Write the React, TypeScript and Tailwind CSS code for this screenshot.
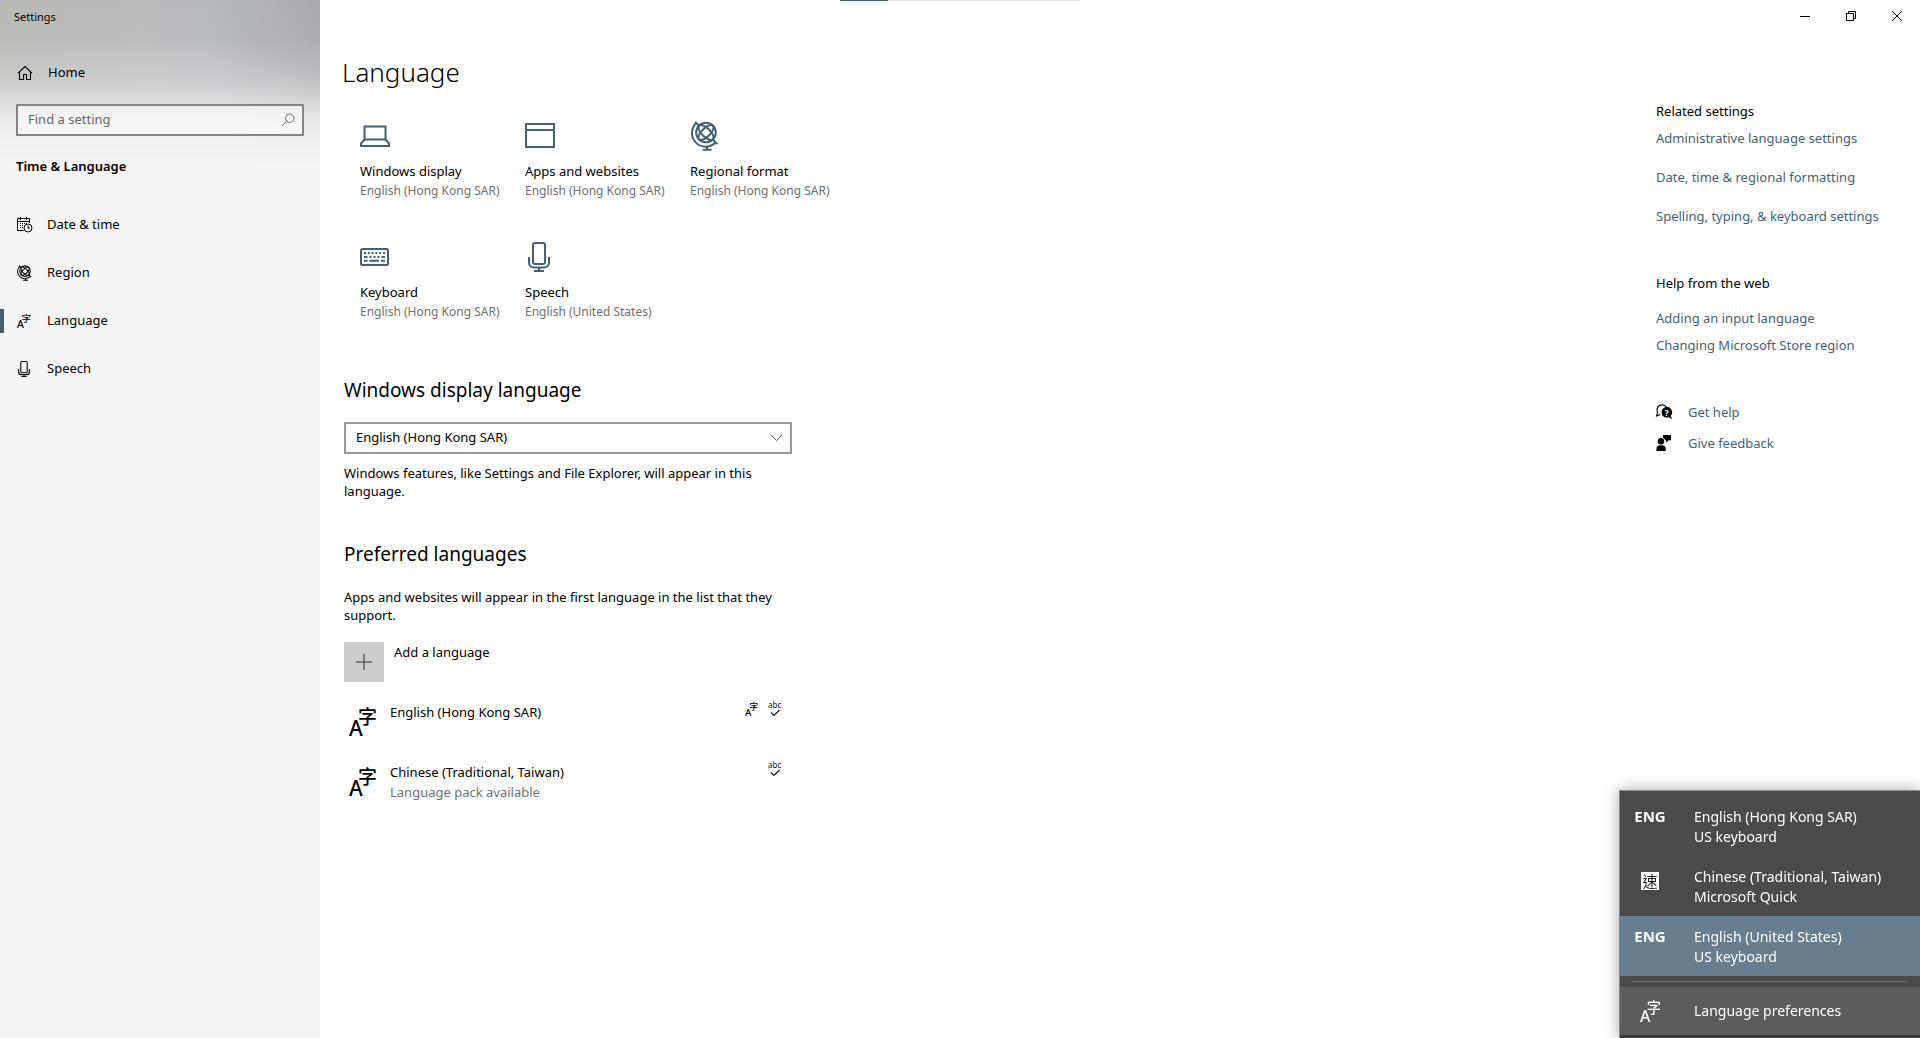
import type { ReactNode } from "react";

interface IconProps {
  className?: string;
}

function HomeIcon() {
  return (
    <svg width="16" height="16" viewBox="0 0 16 16" fill="none" stroke="currentColor" strokeWidth="1.1">
      <path d="M1 8.2 8 1.5l7 6.7M2.5 7v7.5h4V9.500h3v5h4V7" />
    </svg>
  );
}

function SearchIcon() {
  return (
    <svg width="14" height="14" viewBox="0 0 14 14" fill="none" stroke="#666" strokeWidth="1">
      <circle cx="8.800" cy="5.200" r="4.200" />
      <path d="M5.800 8.200 1 13" />
    </svg>
  );
}

function CalendarIcon() {
  return (
    <svg width="16" height="16" viewBox="0 0 16 16" fill="none" stroke="currentColor">
      <path d="M6.500 13.500h-6v-12h12V6M.5 4.500h12M3.500 0v3M9.500 0v3" />
      <path d="M3 6.500h1M5 6.500h1M7 6.500h1M9 6.500h1M3 8.500h1M5 8.500h1M3 10.500h1M5 10.500h1" />
      <circle cx="11" cy="11" r="4" />
      <path d="M11 8.500V11h2" />
    </svg>
  );
}

function GlobeIcon({ className }: IconProps) {
  return (
    <svg className={className} viewBox="0 0 28 30" fill="none" stroke="currentColor" strokeWidth="2">
      <circle cx="15" cy="11.500" r="9.800" />
      <ellipse cx="15" cy="11.500" rx="9.800" ry="4.300" transform="rotate(45 15 11.500)" />
      <ellipse cx="15" cy="11.500" rx="9.800" ry="4.300" transform="rotate(-45 15 11.500)" />
      <path d="M4 1l4.500 4M21.500 18.500l5 4.500M4.800 2.500A13.500 13.500 0 0 0 24.500 21.500" />
      <path d="M16 25v4M11.500 28.700h9" />
    </svg>
  );
}

function MicIcon({ className }: IconProps) {
  return (
    <svg className={className} viewBox="0 0 22 30" fill="none" stroke="currentColor" strokeWidth="2">
      <rect x="5" y="1" width="12" height="21" rx="2" />
      <path d="M1 15v5.500c0 2.800 2.200 5 5 5h10c2.800 0 5-2.200 5-5V15M11 25.500V29M6 29h10" />
    </svg>
  );
}

function LaptopIcon() {
  return (
    <svg width="30" height="22" viewBox="0 0 30 22" fill="none" stroke="currentColor" strokeWidth="2">
      <path d="M4.500 14.500V1.500h21v13M4.500 14.500h21l3.500 4V21H1v-2.500z" />
    </svg>
  );
}

function WindowIcon() {
  return (
    <svg width="30" height="26" viewBox="0 0 30 26" fill="none" stroke="currentColor" strokeWidth="2">
      <path d="M1 1h28v23H1zM1 7h28" />
    </svg>
  );
}

function KeyboardIcon() {
  return (
    <svg width="29" height="18" viewBox="0 0 29 18" fill="none" stroke="currentColor" strokeWidth="2">
      <rect x="1" y="1" width="27" height="16" rx="1.500" />
      <path d="M4 5h21" strokeDasharray="2 1.800" />
      <path d="M4 9h3.500M9.500 9h2M13.500 9h2M17.500 9h2M21.500 9H25" />
      <path d="M4 12.800h3.500M9.500 12.800h9.500M21 12.800h4" />
    </svg>
  );
}

function LanguageIcon({ className }: IconProps) {
  return (
    <svg className={`overflow-visible ${className}`} viewBox="0 0 28 28" fill="currentColor">
      <text x="0" y="28" fontSize="21" fontWeight="500" fontFamily="Noto Sans">A</text>
      <text x="9" y="16" fontSize="19" fontWeight="500" fontFamily="Noto Sans CJK TC">字</text>
    </svg>
  );
}

function SpellCheckIcon() {
  return (
    <svg className="overflow-visible" width="14" height="15" viewBox="0 0 14 15" fill="none">
      <text x="0" y="6" fontSize="8" fontFamily="Noto Sans" fill="#111">abc</text>
      <path d="M3 10.500l3 3L11.500 8" stroke="#111" strokeWidth="1.200" />
    </svg>
  );
}

function HelpIcon() {
  return (
    <svg className="overflow-visible" width="16" height="16" viewBox="0 0 16 16">
      <path d="M1.600 8.200A5 5 0 1 1 10.500 3.500M1.600 8.200.6 12l3.500-1.500" fill="none" stroke="currentColor" strokeWidth="1.200" />
      <path
        d="M10.500 3a5.300 5.300 0 1 0 2.300 10.200l3.200 2-1.200-3.400A5.300 5.300 0 0 0 10.500 3z"
        fill="currentColor"
      />
      <text x="8.500" y="11.500" fontSize="9" fontWeight="700" fontFamily="Noto Sans" fill="#fff">?</text>
    </svg>
  );
}

function FeedbackIcon() {
  return (
    <svg width="16" height="16" viewBox="0 0 16 16" fill="currentColor">
      <circle cx="5" cy="6.200" r="3.200" />
      <path d="M.5 16v-2.500c0-2 1.500-3.300 3.300-3.300h2.600c1.900 0 3.300 1.300 3.300 3.300V16zM7 0h8v5.200h-2.300L10 7.800V5.200H9.200A4.300 4.300 0 0 0 7 2.400z" />
    </svg>
  );
}

const navItems = [
  { label: "Date & time", icon: <CalendarIcon />, current: false },
  { label: "Region", icon: <GlobeIcon className="h-4 w-[15px]" />, current: false },
  { label: "Language", icon: <LanguageIcon className="h-[14px] w-[14px]" />, current: true },
  { label: "Speech", icon: <MicIcon className="ml-px h-4 w-3" />, current: false },
];

const tiles = [
  { title: "Windows display", value: "English (Hong Kong SAR)", icon: <LaptopIcon /> },
  { title: "Apps and websites", value: "English (Hong Kong SAR)", icon: <WindowIcon /> },
  { title: "Regional format", value: "English (Hong Kong SAR)", icon: <GlobeIcon className="h-[30px] w-[30px]" /> },
  { title: "Keyboard", value: "English (Hong Kong SAR)", icon: <KeyboardIcon /> },
  { title: "Speech", value: "English (United States)", icon: <MicIcon className="ml-[3px] h-[30px] w-[22px]" /> },
];

function Sidebar() {
  return (
    <aside className="w-80 shrink-0 bg-[#f5f5f5] bg-[linear-gradient(to_bottom,transparent_0px,rgba(245,245,245,0.04)_40px,rgba(245,245,245,0.3)_80px,rgba(245,245,245,0.85)_120px,#f5f5f5_165px),linear-gradient(to_right,#b9b9b5,#b9bbbd_45%,#b7babf_65%,#a7a9ad)]">
      <p className="pt-2 pl-[14px] text-[11px] leading-[18px]">Settings</p>
      <a href="#home" className="mt-[27px] flex h-10 items-center gap-[15px] pl-[17px] text-[13px]">
        <HomeIcon />
        Home
      </a>
      <div className="mx-4 mt-[11px] flex h-8 items-center border-2 border-[#858585] bg-white/50 pr-[7px] pl-[10px]">
        <input
          type="text"
          aria-label="Find a setting"
          placeholder="Find a setting"
          className="min-w-0 flex-1 bg-transparent text-[13px] outline-none placeholder:text-[#666]"
        />
        <button type="button" aria-label="Search">
          <SearchIcon />
        </button>
      </div>
      <h2 className="mt-5 pl-4 text-[13px] leading-5 font-semibold">Time &amp; Language</h2>
      <nav className="mt-[25px]">
        {navItems.map((item) => (
          <a key={item.label} href="#" className="flex h-12 items-center text-[13px]">
            <span className={item.current ? "h-6 w-1 bg-[#455f75]" : "h-6 w-1"} />
            <span className="ml-[13px] w-[30px]">{item.icon}</span>
            {item.label}
          </a>
        ))}
      </nav>
    </aside>
  );
}

function WindowControls() {
  return (
    <div className="flex h-8 justify-end">
      <button type="button" aria-label="Minimise" className="flex w-[46px] items-center justify-center">
        <svg width="10" height="10" viewBox="0 0 10 10" stroke="#000">
          <path d="M0 5.500h10" />
        </svg>
      </button>
      <button type="button" aria-label="Restore" className="flex w-[46px] items-center justify-center">
        <svg width="10" height="10" viewBox="0 0 10 10" fill="none" stroke="#000">
          <path d="M.5 2.500h7v7h-7zM2.500 2.500v-2h7v7h-2" />
        </svg>
      </button>
      <button type="button" aria-label="Close" className="flex w-[46px] items-center justify-center">
        <svg width="10" height="10" viewBox="0 0 10 10" stroke="#000">
          <path d="M0 0l10 10M10 0L0 10" />
        </svg>
      </button>
    </div>
  );
}

interface LanguageRowProps {
  name: string;
  note?: string;
  badges: ReactNode;
}

function LanguageRow(props: LanguageRowProps) {
  return (
    <li className="flex h-[60px] pr-[10px] pl-[5px]">
      <LanguageIcon className="mt-[6px] h-7 w-7" />
      <div className="ml-[13px] flex-1 text-[13px] leading-5">
        <p>{props.name}</p>
        {props.note && <p className="text-[#707070]">{props.note}</p>}
      </div>
      <div className="flex gap-[10px]">{props.badges}</div>
    </li>
  );
}

function RelatedLinks() {
  return (
    <aside className="w-[264px] shrink-0 pt-[69px] text-[13px] leading-5 text-[#455f75]">
      <h2 className="text-black">Related settings</h2>
      <ul className="mt-[7px] flex flex-col gap-[19px]">
        <li><a href="#">Administrative language settings</a></li>
        <li><a href="#">Date, time &amp; regional formatting</a></li>
        <li><a href="#">Spelling, typing, &amp; keyboard settings</a></li>
      </ul>
      <h2 className="mt-[47px] text-black">Help from the web</h2>
      <ul className="mt-[15px] flex flex-col gap-[7px]">
        <li><a href="#">Adding an input language</a></li>
        <li><a href="#">Changing Microsoft Store region</a></li>
      </ul>
      <div className="mt-[47px] flex flex-col gap-[11px]">
        <a href="#" className="flex items-center gap-4">
          <span className="text-black"><HelpIcon /></span>
          Get help
        </a>
        <a href="#" className="flex items-center gap-4">
          <span className="text-black"><FeedbackIcon /></span>
          Give feedback
        </a>
      </div>
    </aside>
  );
}

interface InputMethodProps {
  badge: ReactNode;
  name: string;
  keyboard: string;
  active?: boolean;
}

function InputMethod(props: InputMethodProps) {
  return (
    <button
      type="button"
      className={`flex h-[60px] w-full pt-[11px] text-left text-sm leading-5 ${props.active ? "bg-[#687d8e]" : ""}`}
    >
      <span className="flex w-[60px] justify-center text-[15px] leading-[18px] font-bold">{props.badge}</span>
      <span className="ml-[14px]">
        {props.name}
        <br />
        {props.keyboard}
      </span>
    </button>
  );
}

function InputSwitcher() {
  return (
    <div className="fixed right-0 bottom-0 w-[301px] border-t border-l border-[#8c8c8c] bg-[#4a4a4a] pt-[5px] text-white shadow-[0_0_14px_rgba(0,0,0,0.35)]">
      <InputMethod badge="ENG" name="English (Hong Kong SAR)" keyboard="US keyboard" />
      <InputMethod
        badge={
          <span className="mt-[5px] flex h-[18px] w-[18px] items-center justify-center bg-white font-['Noto_Sans_CJK_TC',sans-serif] text-[15px] leading-[18px] font-normal text-[#222]">
            速
          </span>
        }
        name="Chinese (Traditional, Taiwan)"
        keyboard="Microsoft Quick"
      />
      <InputMethod badge="ENG" name="English (United States)" keyboard="US keyboard" active />
      <hr className="mx-3 my-[5px] border-[#6d6d6d]" />
      <button
        type="button"
        className="flex h-[51px] w-full items-center border-b-[3px] border-[#3a383a] bg-[#5c5c5c] text-sm"
      >
        <span className="ml-5 w-[54px]">
          <LanguageIcon className="h-[21px] w-[21px]" />
        </span>
        Language preferences
      </button>
    </div>
  );
}

export default function App() {
  return (
    <div className="flex min-h-screen bg-white font-['Noto_Sans','Noto_Sans_CJK_TC',sans-serif] text-black">
      <div className="absolute inset-x-0 top-0 mx-auto h-px w-60 bg-[#e5e5e5]">
        <div className="h-px w-12 bg-[#455f75]" />
      </div>
      <Sidebar />
      <div className="min-w-0 flex-1">
        <WindowControls />
        <div className="flex justify-between">
          <main className="w-[520px] pt-5 pl-6">
            <h1 className="-ml-[2px] text-[26px] leading-10 font-light">Language</h1>
            <ul className="ml-4 grid grid-cols-[repeat(3,165px)]">
              {tiles.map((tile) => (
                <li key={tile.title} className="h-[121px] pt-7">
                  <div className="flex h-[32px] items-center text-[#455f75]">{tile.icon}</div>
                  <p className="mt-[9px] text-[13px] leading-5">{tile.title}</p>
                  <p className="text-xs leading-5 text-[#707070]">{tile.value}</p>
                </li>
              ))}
            </ul>
            <div className="w-[448px]">
              <h2 className="mt-[42px] text-[19px] leading-7">
                <label htmlFor="display-language">Windows display language</label>
              </h2>
              <div className="relative mt-[18px]">
                <select
                  id="display-language"
                  className="h-8 w-full appearance-none border-2 border-[#999] bg-white pl-[10px] text-[13px]"
                >
                  <option>English (Hong Kong SAR)</option>
                </select>
                <svg
                  className="pointer-events-none absolute top-3 right-[9px]"
                  width="13"
                  height="8"
                  viewBox="0 0 13 8"
                  fill="none"
                  stroke="#555"
                >
                  <path d="M1 1l5.500 5.500L12 1" />
                </svg>
              </div>
              <p className="mt-[10px] text-[13px] leading-[18px]">
                Windows features, like Settings and File Explorer, will appear in this language.
              </p>
              <h2 className="mt-10 text-[19px] leading-7">Preferred languages</h2>
              <p className="mt-5 text-[13px] leading-[18px]">
                Apps and websites will appear in the first language in the list that they support.
              </p>
              <button type="button" className="mt-[18px] flex gap-[10px] text-[13px] leading-5">
                <span className="flex h-10 w-10 items-center justify-center bg-[#ccc]">
                  <svg width="16" height="16" viewBox="0 0 16 16" stroke="#333">
                    <path d="M8 0v16M0 8h16" />
                  </svg>
                </span>
                Add a language
              </button>
              <ul className="mt-5">
                <LanguageRow
                  name="English (Hong Kong SAR)"
                  badges={
                    <>
                      <LanguageIcon className="mt-px h-[13px] w-[13px]" />
                      <SpellCheckIcon />
                    </>
                  }
                />
                <LanguageRow
                  name="Chinese (Traditional, Taiwan)"
                  note="Language pack available"
                  badges={<SpellCheckIcon />}
                />
              </ul>
            </div>
          </main>
          <RelatedLinks />
        </div>
      </div>
      <InputSwitcher />
    </div>
  );
}
